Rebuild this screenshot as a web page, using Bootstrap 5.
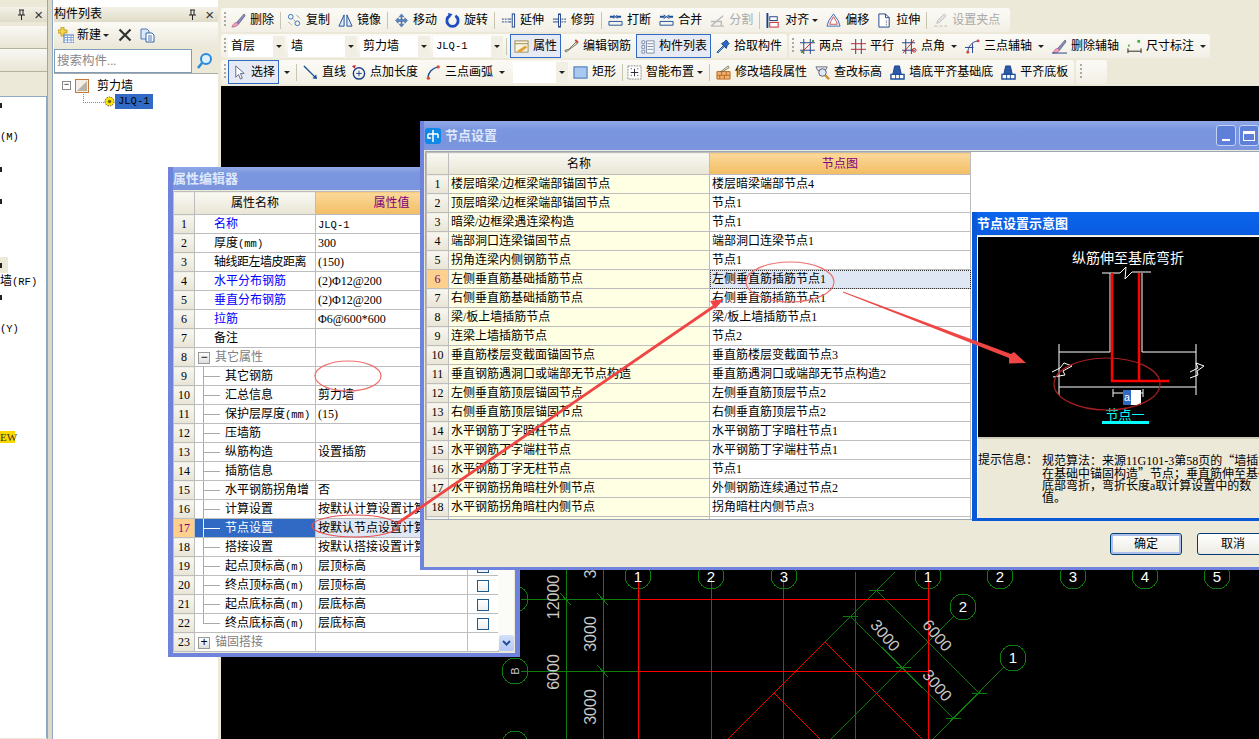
<!DOCTYPE html>
<html lang="zh-CN">
<head>
<meta charset="utf-8">
<title>节点设置</title>
<link href="https://cdn.jsdelivr.net/npm/bootstrap@5.3.0/dist/css/bootstrap.min.css" rel="stylesheet">
<style>
html,body{height:739px;overflow:hidden}
body{background:#ece9d8;color:#000;font:12px/18px "Liberation Serif","Noto Sans CJK SC",serif}
svg{display:block;flex:none}
.lat{font:10.5px "Liberation Mono","Noto Sans CJK SC",monospace}
.cjk{font-family:"Noto Sans CJK SC",sans-serif}
.pane-l{width:47px;height:739px;overflow:hidden}
.split{width:7px;height:739px;background:linear-gradient(90deg,#8fa9c4 0,#8fa9c4 1px,#ddd9c8 1px,#ddd9c8 5px,#8fa9c4 5px,#8fa9c4 6px,#fff 6px)}
.pane-m{width:164px;height:739px;overflow:hidden;background:#fff}
.split2{width:3px;height:739px;background:#ece9d8}
.pane-head{height:15px;margin-top:7px;line-height:15px;background:linear-gradient(#f4f2e8,#dedbc8);white-space:nowrap;flex:none}
.pane-x{font:15px/15px "Liberation Sans",sans-serif;color:#333}
.side-btn{height:23px;background:linear-gradient(#f9f8f3,#e9e6d6);border-bottom:1px solid #b5b2a0;flex:none}
.side-gap{height:24px;background:#ece9d8;flex:none}
.leaf-list{background:#fff;height:642px;border-right:1px solid #8fa9c4;border-top:1px solid #8fa9c4}
.leaf{height:16px;line-height:16px;white-space:nowrap}
.leaf.tk{padding-top:6px}
.leaf.tone{background:#ece9d8;width:8px}
.tick{display:block;width:2px;height:5px;background:#222}
.new-ew{background:#ffd800;color:#333;margin-top:-2px;width:15px;height:12px;line-height:12px;font-size:11px}
.m-bar{height:26px;background:linear-gradient(#fbfaf5,#ebe8d9);padding-left:4px;gap:3px;flex:none}
.m-bar .car{margin-left:-1px}
.m-x{margin-left:6px}
.m-c{margin-left:5px}
.search-wrap{height:25px;background:#ece9d8;gap:3px;flex:none}
.search-in{width:138px;height:24px;background:#fff;border:1px solid #7f9db9;color:#888;padding-left:2px;line-height:22px;font-size:12.5px}
.tree{background:#fff;padding:3px 0 0 8px;height:660px;border-top:1px solid #aaa}
.tree-line{height:17px;gap:4px}
.tree-sub{padding-left:29px}
.xbox{width:9px;height:9px;border:1px solid #888;background:#fff;font:9px/7px "Liberation Mono",monospace;text-align:center;flex:none}
.tree-sel{background:#316ac5;padding:0 3px;height:15px;line-height:15px;margin-left:0}
.dots{width:21px;height:9px;margin:-6px 0 0 -8px;border-left:1px dotted #888;border-bottom:1px dotted #888}
.main-col{flex:1;min-width:0;height:739px}
.tb-row{height:24px;margin-bottom:2px;gap:2px;flex:none}
.tb-row.first{margin-top:8px}
.tbar{height:24px;background:linear-gradient(#fbfaf6,#f2f0e5);border-radius:3px;padding:0 4px 0 3px;gap:8px;white-space:nowrap}
.tbar.t1{width:789px}
.tbar.t2a{width:566px;gap:3px}
.tbar.t2b{width:421px}
.tbar.t3a{width:853px}
.tbar.t3b{width:31px}
.grip{width:2px;height:16px;margin-right:-3px;background:repeating-linear-gradient(#aaa 0,#aaa 2px,transparent 2px,transparent 4px);flex:none}
.t2a .grip{margin-right:-1px}
.t2b .grip{margin-right:-2px}
.t3a .grip{margin-right:-6px}
.t3b .grip{margin:0 0 0 1px}
.ti{gap:4px;height:22px;flex:none}
.ti svg{width:15px;height:15px}
.sep{width:1px;height:17px;background:#c8c5b2;margin:0 -2px;flex:none}
.t2a .sep{margin:0}
.car{width:0;height:0;border:3px solid transparent;border-top:3px solid #222;border-bottom:0;margin-left:3px;flex:none}
.car.a{margin-left:-1px}
.car.b{margin-left:2px}
.car.c{margin-left:-3px}
.act{border:1px solid #316ac5;background:#e6eaf5;padding:0 3px;height:24px;gap:4px}
.m2{margin-left:2px}
.m1{margin-left:1px}
.n3{margin-left:-3px}
.n2{margin-left:-2px}
.off{color:#aaa}
.sel-box{height:21px;background:#fff;padding-left:3px;white-space:nowrap;flex:none}
.w55{width:55px}.w57{width:57px}.w69{width:69px}.w70{width:70px}
.sel-arr{width:12px;height:21px;background:#f1efe4;margin-left:auto;flex:none}
.sel-arr i{display:block;border:3px solid transparent;border-top:3px solid #222;border-bottom:0;width:0;margin:9px auto 0}
.cad{flex:1;background:#000;overflow:hidden;min-height:0}
.cad svg{shape-rendering:crispEdges}
.cad text{shape-rendering:auto}
.win{z-index:2;overflow:hidden}
.w-prop{left:168px;top:167px;width:352px;height:490px;background:#ece9d8;border:5px solid #6f82dc;border-top:0;border-bottom-width:4px}
.w-node{left:420px;top:121px;width:900px;height:449px;background:#ece9d8;border:4px solid #6f82dc;border-top:0;border-bottom-width:3px;z-index:3}
.w-view{left:972px;top:212px;width:340px;height:309px;background:#ece9d8;border:3px solid #0a57d8;border-top:0;border-left-width:5px;z-index:4}
.t-bar{height:24px;background:linear-gradient(#90a8e6,#7a96df 30%,#7a95dd);margin:0 -5px;padding-left:5px;color:#dfe8fa;font-weight:700;font-size:13px}
.w-prop .t-bar{height:23px;margin-bottom:1px}
.w-node .t-bar{height:29px;margin:0 -4px 1px;padding-left:5px;gap:4px}
.w-view .t-bar{background:linear-gradient(#0b66ec,#0a5be0);height:23px;color:#fff;margin:0 -3px 1px -5px;padding-left:5px}
.t-btns{margin-right:61px;gap:3px}
.tb-btn{width:20px;height:21px;border:1px solid #c5d2f4;border-radius:3px;background:#5f80d8}
.tb-btn i{display:block;background:#fff}
.i-min{width:8px;height:2px}
.i-max{width:12px;height:10px;border:1px solid #fff;border-top-width:3px;background:none!important}
.gridt{table-layout:fixed;margin:0;border-color:#bdbdbd;font-size:12px}
.gridt.gp{width:325px}
.gridt.gn{width:544px}
.c21{width:21px}.c22{width:22px}.c121{width:121px}.c152{width:152px}.c31{width:31px}.c261{width:261px}
.gridt>:not(caption)>*>*{padding:0 2px;height:19px;line-height:18px;white-space:nowrap;overflow:hidden;border:1px solid #bdbdbd;background-color:#fff;color:#000;vertical-align:middle}
.gridt>thead>tr>th{height:22px;font-weight:400;text-align:center;background:linear-gradient(#f9f8f2,#e9e6d6)}
.gridt.gp>thead>tr>th{height:23px}
.gridt>thead>tr>th.hot{background:linear-gradient(#fbd99b,#f2bd63);color:#800080}
.gridt>tbody>tr>td.no{background:linear-gradient(#f8f7f0,#e8e5d6);text-align:center;padding:0}
.gridt>tbody>tr>td.no.hot{background:#fdd18d;color:#800080}
.gridt>tbody>tr>td.sel{background:#316ac5;color:#fff}
.gridt>tbody>tr>td.soft{background:#dfe6f4}
.gridt>tbody>tr>td.dot{background:#dfe6f4;outline:1px dotted #333;outline-offset:-1px}
.gridt>tbody>tr>td.yel{background:#ffffe3}
.gridt>tbody>tr>td.nm{padding-left:19px}
.gridt>tbody>tr>td.tight{letter-spacing:-.5px}
.gridt>tbody>tr>td.grp{padding-left:3px;color:#808080}
.gridt>tbody>tr>td.blue{color:#00f}
.gridt>tbody>tr>td.leafc{padding-left:30px;background-image:linear-gradient(#aaa,#aaa),linear-gradient(#aaa,#aaa);background-size:1px 100%,17px 1px;background-position:8px 0,8px 50%;background-repeat:no-repeat}
.gridt>tbody>tr>td.leafc.sel{background-image:linear-gradient(#cfe,#cfe),linear-gradient(#fff,#fff)}
.gridt>tbody>tr>td.leafc.end{background-size:1px 50%,17px 1px}
.gbox{display:inline-block;width:12px;height:12px;border:1px solid #1d5a8e;background:linear-gradient(#fff,#eee);vertical-align:middle;margin-left:7px}
.xbig{display:inline-block;width:12px;height:12px;border:1px solid #999;background:linear-gradient(#fff,#ddd);font:12px/10px "Liberation Mono",monospace;text-align:center;color:#000;vertical-align:middle;margin-right:5px}
.sb-track{left:325px;top:24px;width:16px;height:459px;background:#fbfbf7}
.sb-arr{left:326px;top:468px;width:15px;height:16px;background:linear-gradient(#d4e0fa,#b5c9f5);border-radius:2px}
.grid-frame{height:369px;background:#fff;border:1px solid #9aa7b8;overflow:hidden;margin:0 -20px 0 1px}
.foot{padding:13px 0 0 686px;gap:15px}
.xp-btn{width:72px;height:22px;line-height:18px;padding:0;font-size:12px;border:1px solid #003c74;border-radius:3px;background:linear-gradient(#fff,#ecebe3);color:#000;flex:none;box-shadow:none}
.xp-btn.def{box-shadow:inset 0 0 0 2px #a9c0ec}
.v-body{border-top:1px solid #fff;border-left:1px solid #fff}
.v-info{height:81px;padding:15px 0 0 0;border-top:2px solid #cfccb9;line-height:12px;font-size:12px;white-space:nowrap}
.v-lab{width:64px;flex:none}
.annot{left:0;top:0;width:1259px;height:739px;z-index:5;pointer-events:none}
</style>
</head>
<body class="d-flex align-items-start">

<aside class="pane-l d-flex flex-column">
  <div class="pane-head d-flex align-items-center justify-content-end gap-2 pe-1">
    <svg width="9" height="11" viewBox="0 0 9 11"><path d="M2 1h5M3 1v5M6 1v5M1 6h7M4.500 6v5" stroke="#222" fill="none"/></svg>
    <span class="pane-x">×</span>
  </div>
  <div class="side-btn mt-1"></div>
  <div class="side-btn"></div>
  <div class="side-gap"></div>
  <div class="leaf-list">
    <div class="leaf tk"><span class="tick"></span></div>
    <div class="leaf"></div>
    <div class="leaf lat">(M)</div>
    <div class="leaf"></div>
    <div class="leaf tk"><span class="tick"></span></div>
    <div class="leaf"></div>
    <div class="leaf tk"><span class="tick"></span></div>
    <div class="leaf"></div><div class="leaf"></div><div class="leaf"></div>
    <div class="leaf tk tone"><span class="tick"></span></div>
    <div class="leaf">墙<span class="lat">(RF)</span></div>
    <div class="leaf tk"><span class="tick"></span></div>
    <div class="leaf"></div>
    <div class="leaf lat">(Y)</div>
    <div class="leaf"></div><div class="leaf"></div><div class="leaf"></div><div class="leaf"></div><div class="leaf"></div><div class="leaf"></div>
    <div class="new-ew">EW</div>
  </div>
</aside>
<div class="split"></div>

<aside class="pane-m d-flex flex-column">
  <div class="pane-head d-flex align-items-center">
    <span>构件列表</span>
    <span class="ms-auto d-flex align-items-center gap-2 pe-1">
      <svg width="9" height="11" viewBox="0 0 9 11"><path d="M2 1h5M3 1v5M6 1v5M1 6h7M4.500 6v5" stroke="#222" fill="none"/></svg>
      <span class="pane-x">×</span>
    </span>
  </div>
  <div class="m-bar d-flex align-items-center">
    <svg width="16" height="16" viewBox="0 0 16 16"><path d="M3 0h3v3h3v3H6v3H3V6H0V3h3z" fill="#f7d548" stroke="#a98a10" stroke-width=".7"/><rect x="6" y="8" width="10" height="8" fill="#fff" stroke="#4a78c0"/><path d="M6 10.500h10M6 13h10M9.500 8v8M13 8v8" stroke="#7ea3d8"/></svg>
    <span>新建</span><span class="car"></span>
    <svg class="m-x" width="14" height="14" viewBox="0 0 14 14"><path d="M1.500 1.500l11 11M12.500 1.500l-11 11" stroke="#333" stroke-width="2.200"/></svg>
    <svg class="m-c" width="15" height="15" viewBox="0 0 15 15"><path d="M1 1h6l2 2v8H1z" fill="#dce9fa" stroke="#4a78c0"/><path d="M6 5h6l2 2v7H6z" fill="#fff" stroke="#3366aa"/><path d="M8 8h4M8 10h4M8 12h4" stroke="#4a78c0"/></svg>
  </div>
  <div class="search-wrap d-flex align-items-center">
    <div class="search-in">搜索构件...</div>
    <svg width="20" height="20" viewBox="0 0 20 20"><circle cx="11" cy="8" r="5" fill="#dff0ff" stroke="#2a8ae0" stroke-width="2"/><path d="M7 12l-4 5" stroke="#2a8ae0" stroke-width="2.500"/></svg>
  </div>
  <div class="tree">
    <div class="tree-line d-flex align-items-center">
      <span class="xbox">−</span>
      <svg width="14" height="14" viewBox="0 0 14 14"><rect x=".5" y=".5" width="13" height="13" fill="#f3efe6" stroke="#c8793c"/><path d="M2 12L12 2v10z" fill="#b9b3a6"/></svg>
      <span class="ms-1">剪力墙</span>
    </div>
    <div class="tree-sub d-flex align-items-center">
      <span class="dots"></span>
      <svg width="11" height="11" viewBox="0 0 11 11"><circle cx="5.500" cy="5.500" r="4.500" fill="#ffe600" stroke="#555" stroke-dasharray="1.500 1"/><circle cx="5.500" cy="5.500" r="1.800" fill="#7a6a00"/></svg>
      <span class="tree-sel lat">JLQ-1</span>
    </div>
  </div>
</aside>
<div class="split2"></div>

<main class="main-col d-flex flex-column">
  <div class="tb-row first d-flex">
    <div class="tbar t1 d-flex align-items-center">
      <span class="grip"></span>
      <span class="ti d-flex align-items-center"><svg viewBox="0 0 16 16"><path d="M14 1L6 10l2 2 7-9z" fill="#8a8ad0" stroke="#444" stroke-width=".6"/><path d="M6 10c-2 0-4 2-5 5 3 0 6-1 7-3z" fill="#f0a0c0" stroke="#a04070" stroke-width=".6"/></svg><span>删除</span></span>
      <span class="sep"></span>
      <span class="ti d-flex align-items-center"><svg viewBox="0 0 16 16"><circle cx="4" cy="4" r="2.500" fill="none" stroke="#3070c0"/><circle cx="11" cy="11" r="2.500" fill="none" stroke="#3070c0"/><path d="M6 6l3 3M2 10l3 3M10 2l4 4" stroke="#555" stroke-dasharray="1 1"/></svg><span>复制</span></span>
      <span class="ti d-flex align-items-center"><svg viewBox="0 0 16 16"><path d="M6.500 2L1 14h5.500zM9.500 2L15 14H9.500z" fill="#dfeafa" stroke="#1d4f9a"/></svg><span>镜像</span></span>
      <span class="sep"></span>
      <span class="ti d-flex align-items-center"><svg viewBox="0 0 16 16"><path d="M8 1l2.500 3h-2v3h3V5l3 3-3 3V9h-3v3h2L8 15l-2.500-3h2V9h-3v2l-3-3 3-3v2h3V4h-2z" fill="#5a88c8" stroke="#274f8c" stroke-width=".5"/></svg><span>移动</span></span>
      <span class="ti d-flex align-items-center"><svg viewBox="0 0 16 16"><path d="M5 3a6 6 0 1 0 6 0" fill="none" stroke="#1d4fc0" stroke-width="3"/><path d="M3 0l5 1-3 4z" fill="#1d4fc0"/></svg><span>旋转</span></span>
      <span class="sep"></span>
      <span class="ti d-flex align-items-center"><svg viewBox="0 0 16 16"><path d="M1 6.500h7M1 9.500h7" stroke="#1d3f8a" stroke-dasharray="2 1"/><path d="M8 6.500h3M8 9.500h3" stroke="#1d3f8a"/><rect x="12" y="1" width="2.500" height="14" fill="#fff" stroke="#1d3f8a"/></svg><span>延伸</span></span>
      <span class="ti d-flex align-items-center"><svg viewBox="0 0 16 16"><path d="M1 6.500h6M1 9.500h6" stroke="#1d3f8a"/><path d="M10 6.500h5M10 9.500h5" stroke="#1d3f8a" stroke-dasharray="2 1"/><rect x="7" y="1" width="2" height="14" fill="#fff" stroke="#1d3f8a"/></svg><span>修剪</span></span>
      <span class="sep"></span>
      <span class="ti d-flex align-items-center"><svg viewBox="0 0 16 16"><path d="M1 9h14M1 13h14M1 9v4M15 9v4" stroke="#1d4f9a" fill="none"/><path d="M2 4h5M9 4h5" stroke="#1d4f9a" stroke-width="2"/><path d="M6 2l2 2-2 2M10 2L8 4l2 2" stroke="#1d4f9a" fill="none"/></svg><span>打断</span></span>
      <span class="ti d-flex align-items-center"><svg viewBox="0 0 16 16"><path d="M1 9h14M1 13h14M1 9v4M15 9v4" stroke="#1d4f9a" fill="none"/><path d="M1 4h5M10 4h5" stroke="#1d4f9a" stroke-width="2"/><path d="M5 2l3 2-3 2M11 2L8 4l3 2" stroke="#1d4f9a" fill="none"/></svg><span>合并</span></span>
      <span class="ti d-flex align-items-center off"><svg viewBox="0 0 16 16"><path d="M1 14L14 3M1 14h14M1 9h11v5" stroke="#bbb" fill="none" stroke-width="1.500"/></svg><span>分割</span></span>
      <span class="sep"></span>
      <span class="ti d-flex align-items-center"><svg viewBox="0 0 16 16"><path d="M1.500 0v16" stroke="#1d3f8a" stroke-width="2"/><rect x="4" y="4" width="8" height="4" fill="#fff" stroke="#1d3f8a"/><rect x="4" y="10" width="9" height="5" fill="#fff" stroke="#c02030"/></svg><span>对齐</span><span class="car a"></span></span>
      <span class="ti d-flex align-items-center"><svg viewBox="0 0 16 16"><path d="M8 1l5 7 2 6H1l2-6z" fill="#eef2fa" stroke="#3a6ab0"/><path d="M8 4l3 5 1 3H4l1-3z" fill="#fff" stroke="#d05050"/></svg><span>偏移</span></span>
      <span class="ti d-flex align-items-center"><svg viewBox="0 0 16 16"><path d="M2 1h7l4 4v10H2z" fill="#fff" stroke="#1d3f8a"/><path d="M9 1v4h4" fill="none" stroke="#1d3f8a"/><path d="M10 8v6" stroke="#555" stroke-dasharray="1 1"/></svg><span>拉伸</span></span>
      <span class="sep"></span>
      <span class="ti d-flex align-items-center off"><svg viewBox="0 0 16 16"><path d="M12 1l2 2-7 7-3 1 1-3zM1 14h4M7 14h3M12 14h3" stroke="#bbb" fill="#e4e4e4"/></svg><span>设置夹点</span></span>
    </div>
  </div>

  <div class="tb-row d-flex">
    <div class="tbar t2a d-flex align-items-center">
      <span class="grip"></span>
      <div class="sel-box w57 d-flex align-items-center">首层<span class="sel-arr"><i></i></span></div>
      <div class="sel-box w69 d-flex align-items-center">墙<span class="sel-arr"><i></i></span></div>
      <div class="sel-box w70 d-flex align-items-center">剪力墙<span class="sel-arr"><i></i></span></div>
      <div class="sel-box w70 d-flex align-items-center"><span class="lat">JLQ-1</span><span class="sel-arr"><i></i></span></div>
      <span class="sep"></span>
      <span class="ti act d-flex align-items-center"><svg viewBox="0 0 16 16"><rect x="1" y="2" width="14" height="12" fill="#f8f4e4" stroke="#a08a50"/><path d="M1 5h14" stroke="#a08a50"/><path d="M3 13l9-6 2 2-7 5z" fill="#e0a030"/></svg><span>属性</span></span>
      <span class="ti d-flex align-items-center"><svg viewBox="0 0 16 16"><path d="M14 2l-9 9-4 1 1 2 12-9z" fill="#e8e0b0" stroke="#444" stroke-width=".7"/><path d="M12 1l3 3" stroke="#d04040" stroke-width="2"/></svg><span>编辑钢筋</span></span>
      <span class="ti act m2 d-flex align-items-center"><svg viewBox="0 0 16 16"><path d="M2 2h3v3H2zM2 7h3v3H2zM2 12h3v3H2z" fill="#fff" stroke="#7a8aa8"/><path d="M7 2h8v13H7z" fill="#fff" stroke="#7a8aa8"/><path d="M8 5h6M8 8h6M8 11h6" stroke="#7a8aa8"/></svg><span>构件列表</span></span>
      <span class="ti m1 d-flex align-items-center"><svg viewBox="0 0 16 16"><path d="M9 7l-7 7 1 1 7-7z" fill="#8fb8ea" stroke="#1d4f9a"/><path d="M7 5l5 5 1-3 2-2-3-4-2 2z" fill="#2a6ac0" stroke="#1d3f8a"/></svg><span>拾取构件</span></span>
    </div>
    <div class="tbar t2b d-flex align-items-center">
      <span class="grip"></span>
      <span class="ti d-flex align-items-center"><svg viewBox="0 0 16 16"><path d="M4 0v16M11 0v16M0 4h16M0 12h16" stroke="#1d3f8a"/><path d="M2 14L14 2" stroke="#d02020"/><rect x="1" y="13" width="2" height="2" fill="#3a9a30"/><rect x="13" y="1" width="2" height="2" fill="#3a9a30"/></svg><span>两点</span></span>
      <span class="ti d-flex align-items-center"><svg viewBox="0 0 16 16"><path d="M5 0v16M11 0v16" stroke="#1d3f8a"/><path d="M0 5h16M0 11h16" stroke="#c02030"/></svg><span>平行</span></span>
      <span class="ti d-flex align-items-center"><svg viewBox="0 0 16 16"><path d="M4 0v16M10 0v16M0 4h14M0 12h14" stroke="#1d3f8a"/><path d="M1 15L13 1" stroke="#d02020"/><circle cx="13" cy="12" r="2" fill="none" stroke="#d02020"/></svg><span>点角</span><span class="car b"></span></span>
      <span class="ti d-flex align-items-center"><svg viewBox="0 0 16 16"><path d="M3 15C3 8 7 3 14 2" fill="none" stroke="#1d3f8a"/><path d="M0 9h9M8 5v10" stroke="#1d3f8a"/><circle cx="3" cy="14" r="1.500" fill="#d04040"/><circle cx="14" cy="2" r="1.500" fill="#d04040"/></svg><span>三点辅轴</span><span class="car b"></span></span>
      <span class="ti d-flex align-items-center"><svg viewBox="0 0 16 16"><path d="M14 1L6 10l2 2 7-9z" fill="#8a8ad0" stroke="#444" stroke-width=".6"/><path d="M6 10c-2 0-4 2-5 5 3 0 6-1 7-3z" fill="#f0a0c0" stroke="#a04070" stroke-width=".6"/><path d="M0 15h16" stroke="#1d3f8a"/></svg><span>删除辅轴</span></span>
      <span class="ti d-flex align-items-center"><svg viewBox="0 0 16 16"><rect x="11" y="1" width="3" height="3" fill="#4ab04a"/><rect x="1" y="6" width="2" height="2" fill="#4ab04a"/><path d="M1 10v5M15 10v5M1 13h14" stroke="#222"/></svg><span>尺寸标注</span><span class="car b"></span></span>
    </div>
  </div>

  <div class="tb-row d-flex">
    <div class="tbar t3a d-flex align-items-center">
      <span class="grip"></span>
      <span class="ti act d-flex align-items-center"><svg viewBox="0 0 16 16"><path d="M4 1v12l3-3 2 5 2-1-2-5h4z" fill="#fff" stroke="#5a6a8a"/></svg><span>选择</span></span>
      <span class="car c"></span>
      <span class="sep"></span>
      <span class="ti d-flex align-items-center"><svg viewBox="0 0 16 16"><path d="M1 1l13 13" stroke="#1d4f9a" stroke-width="1.500"/><path d="M15 15l-5-1 4-4z" fill="#1d4f9a"/></svg><span>直线</span></span>
      <span class="ti n3 d-flex align-items-center"><svg viewBox="0 0 16 16"><circle cx="8.500" cy="9" r="6" fill="none" stroke="#1d3f8a" stroke-width="1.500"/><path d="M8.500 6v6M5.500 9h6" stroke="#1d3f8a"/><path d="M1 1l3 3 1-4z" fill="#c02030"/></svg><span>点加长度</span></span>
      <span class="ti d-flex align-items-center"><svg viewBox="0 0 16 16"><path d="M2 14C2 8 7 3 13 2" fill="none" stroke="#1d4f9a" stroke-width="1.500"/><circle cx="2.500" cy="14" r="1.800" fill="#e05030"/><circle cx="13" cy="2" r="1.800" fill="#e05030"/></svg><span>三点画弧</span><span class="car b"></span></span>
      <div class="sel-box w55 d-flex align-items-center"><span class="sel-arr"><i></i></span></div>
      <span class="ti n3 d-flex align-items-center"><svg viewBox="0 0 16 16"><rect x="1" y="2" width="14" height="12" fill="#a9c8f0" stroke="#3a6ab0"/></svg><span>矩形</span></span>
      <span class="sep"></span>
      <span class="ti n2 d-flex align-items-center"><svg viewBox="0 0 16 16"><rect x="1" y="1" width="14" height="14" fill="#fff" stroke="#888" stroke-dasharray="2 1"/><path d="M4 8h8M8 4v8M4 4h1M11 4h1M4 11h1M11 11h1" stroke="#223"/></svg><span>智能布置</span><span class="car a"></span></span>
      <span class="sep"></span>
      <span class="ti d-flex align-items-center"><svg viewBox="0 0 16 16"><path d="M1 7h14v8H1z" fill="#f0b070" stroke="#b86a20"/><path d="M1 11h14M6 7v4M11 7v4M4 11v4M9 11v4" stroke="#b86a20"/><path d="M5 7l8-6 1 2-7 4z" fill="#e8e0b0" stroke="#444" stroke-width=".6"/></svg><span>修改墙段属性</span></span>
      <span class="ti d-flex align-items-center"><svg viewBox="0 0 16 16"><path d="M1 2h12l-2 4H3z" fill="#e8ecf4" stroke="#667"/><circle cx="8" cy="8" r="4" fill="#dfe8f5" stroke="#556"/><path d="M11 11l4 4" stroke="#d09030" stroke-width="2.500"/></svg><span>查改标高</span></span>
      <span class="ti d-flex align-items-center"><svg viewBox="0 0 16 16"><path d="M5 1h5l2 9H3z" fill="#2a5aa8" stroke="#1d3f8a"/><path d="M1 10h14v5H1z" fill="#fff" stroke="#1d4fa0" stroke-width="1.500"/><path d="M6 10v5M10 10v5" stroke="#1d4fa0"/></svg><span>墙底平齐基础底</span></span>
      <span class="ti d-flex align-items-center"><svg viewBox="0 0 16 16"><path d="M5 1h5l2 9H3z" fill="#2a5aa8" stroke="#1d3f8a"/><path d="M1 10h14v5H1z" fill="#fff" stroke="#1d4fa0" stroke-width="1.500"/><path d="M6 10v5M10 10v5" stroke="#1d4fa0"/></svg><span>平齐底板</span></span>
    </div>
    <div class="tbar t3b d-flex align-items-center"><span class="grip"></span></div>
  </div>

  <div class="cad">
    <svg width="1039" height="655" viewBox="220 84 1039 655" fill="none">
      <g stroke="#0a7d0a">
        <path d="M565 560V739M602 560V739M520 597H637M520 669H637"/>
        <path d="M559 591l11 12M596 591l11 12M596 663l11 12"/>
        <path d="M894 570L824 640M952 615L828 739M1002 666L930 739M875 588L978 691M849 614L952 716"/>
        <path d="M868 588h15M842 614h15M895 665h15M971 691h15M945 716h15"/>
        <circle cx="637" cy="574" r="13"/><circle cx="710" cy="574" r="13"/><circle cx="783" cy="574" r="13"/>
        <circle cx="927" cy="574" r="13"/><circle cx="999" cy="574" r="13"/><circle cx="1072" cy="574" r="13"/><circle cx="1144" cy="574" r="13"/><circle cx="1216" cy="574" r="13"/>
        <circle cx="962" cy="605" r="13"/><circle cx="1012" cy="656" r="13"/>
        <circle cx="514" cy="597" r="13"/><circle cx="514" cy="669" r="13"/><circle cx="514" cy="742" r="13"/>
      </g>
      <g stroke="#ff0000">
        <path d="M637 575V739M710 575V739M782 575V739M854 570V739M927 575V739M637 597H927M637 669H927"/>
        <path d="M824 640L725 739M824 640L923 739M773 691L821 739"/>
      </g>
      <g fill="#9b00d8"><rect x="632" y="737" width="10" height="3"/><rect x="705" y="737" width="10" height="3"/><rect x="777" y="737" width="10" height="3"/><rect x="922" y="737" width="10" height="3"/></g>
      <g font-family="Liberation Sans,sans-serif" font-size="15" fill="#fff" text-anchor="middle">
        <text x="637" y="580">1</text><text x="710" y="580">2</text><text x="783" y="580">3</text>
        <text x="927" y="580">1</text><text x="999" y="580">2</text><text x="1072" y="580">3</text><text x="1144" y="580">4</text><text x="1216" y="580">5</text>
        <text x="962" y="610">2</text><text x="1012" y="661">1</text>
      </g>
      <g font-family="Liberation Sans,sans-serif" font-size="16" fill="#c8c8c8" text-anchor="middle">
        <text transform="translate(558 595) rotate(-90)">12000</text>
        <text transform="translate(558 670) rotate(-90)">6000</text>
        <text transform="translate(595 632) rotate(-90)">3000</text>
        <text transform="translate(595 705) rotate(-90)">3000</text>
        <text transform="translate(595 572) rotate(-90)">3</text>
        <text transform="translate(880 637) rotate(50)">3000</text>
        <text transform="translate(932 637) rotate(50)">6000</text>
        <text transform="translate(932 687) rotate(50)">3000</text>
        <text transform="translate(518 669) rotate(-90)" font-size="11">B</text>
      </g>
    </svg>
  </div>
</main>

<section class="win w-prop position-absolute">
  <div class="t-bar d-flex align-items-center">属性编辑器</div>
  <table class="table gridt gp">
    <colgroup><col class="c21"><col class="c121"><col class="c152"><col class="c31"></colgroup>
    <thead><tr><th></th><th>属性名称</th><th class="hot">属性值</th><th></th></tr></thead>
    <tbody>
      <tr><td class="no">1</td><td class="nm blue">名称</td><td><span class="lat">JLQ-1</span></td><td></td></tr>
      <tr><td class="no">2</td><td class="nm">厚度<span class="lat">(mm)</span></td><td>300</td><td></td></tr>
      <tr><td class="no">3</td><td class="nm tight">轴线距左墙皮距离</td><td>(150)</td><td></td></tr>
      <tr><td class="no">4</td><td class="nm blue">水平分布钢筋</td><td>(2)Φ12@200</td><td></td></tr>
      <tr><td class="no">5</td><td class="nm blue">垂直分布钢筋</td><td>(2)Φ12@200</td><td></td></tr>
      <tr><td class="no">6</td><td class="nm blue">拉筋</td><td>Φ6@600*600</td><td></td></tr>
      <tr><td class="no">7</td><td class="nm">备注</td><td></td><td></td></tr>
      <tr><td class="no">8</td><td class="grp"><span class="xbig">−</span>其它属性</td><td></td><td></td></tr>
      <tr><td class="no">9</td><td class="leafc">其它钢筋</td><td></td><td></td></tr>
      <tr><td class="no">10</td><td class="leafc">汇总信息</td><td>剪力墙</td><td></td></tr>
      <tr><td class="no">11</td><td class="leafc">保护层厚度<span class="lat">(mm)</span></td><td>(15)</td><td></td></tr>
      <tr><td class="no">12</td><td class="leafc">压墙筋</td><td></td><td></td></tr>
      <tr><td class="no">13</td><td class="leafc">纵筋构造</td><td>设置插筋</td><td></td></tr>
      <tr><td class="no">14</td><td class="leafc">插筋信息</td><td></td><td></td></tr>
      <tr><td class="no">15</td><td class="leafc">水平钢筋拐角增</td><td>否</td><td></td></tr>
      <tr><td class="no">16</td><td class="leafc">计算设置</td><td>按默认计算设置计算</td><td></td></tr>
      <tr><td class="no hot">17</td><td class="leafc sel">节点设置</td><td class="soft">按默认节点设置计算</td><td></td></tr>
      <tr><td class="no">18</td><td class="leafc">搭接设置</td><td>按默认搭接设置计算</td><td></td></tr>
      <tr><td class="no">19</td><td class="leafc">起点顶标高<span class="lat">(m)</span></td><td>层顶标高</td><td><span class="gbox"></span></td></tr>
      <tr><td class="no">20</td><td class="leafc">终点顶标高<span class="lat">(m)</span></td><td>层顶标高</td><td><span class="gbox"></span></td></tr>
      <tr><td class="no">21</td><td class="leafc">起点底标高<span class="lat">(m)</span></td><td>层底标高</td><td><span class="gbox"></span></td></tr>
      <tr><td class="no">22</td><td class="leafc end">终点底标高<span class="lat">(m)</span></td><td>层底标高</td><td><span class="gbox"></span></td></tr>
      <tr><td class="no">23</td><td class="grp"><span class="xbig">+</span>锚固搭接</td><td></td><td></td></tr>
    </tbody>
  </table>
  <div class="sb-track position-absolute"></div>
  <div class="sb-arr position-absolute d-flex align-items-center justify-content-center">
    <svg width="9" height="7" viewBox="0 0 9 7"><path d="M1 1l3.500 3.500L8 1" fill="none" stroke="#2a4f9a" stroke-width="2"/></svg>
  </div>
</section>

<section class="win w-node position-absolute">
  <div class="t-bar d-flex align-items-center">
    <svg width="16" height="16" viewBox="0 0 16 16"><rect width="16" height="16" rx="3" fill="#1088e8"/><path d="M8 2v12M3 6h10M3 6v4h3M13 6v4" stroke="#fff" stroke-width="1.500" fill="none"/></svg>
    <span>节点设置</span>
    <span class="t-btns d-flex ms-auto">
      <span class="tb-btn d-flex align-items-end justify-content-center pb-1"><i class="i-min"></i></span>
      <span class="tb-btn d-flex align-items-center justify-content-center"><i class="i-max"></i></span>
    </span>
  </div>
  <div class="grid-frame">
    <table class="table gridt gn">
      <colgroup><col class="c22"><col class="c261"><col class="c261"></colgroup>
      <thead><tr><th></th><th>名称</th><th class="hot">节点图</th></tr></thead>
      <tbody>
        <tr><td class="no">1</td><td class="yel">楼层暗梁/边框梁端部锚固节点</td><td>楼层暗梁端部节点4</td></tr>
        <tr><td class="no">2</td><td class="yel">顶层暗梁/边框梁端部锚固节点</td><td>节点1</td></tr>
        <tr><td class="no">3</td><td class="yel">暗梁/边框梁遇连梁构造</td><td>节点1</td></tr>
        <tr><td class="no">4</td><td class="yel">端部洞口连梁锚固节点</td><td>端部洞口连梁节点1</td></tr>
        <tr><td class="no">5</td><td class="yel">拐角连梁内侧钢筋节点</td><td>节点1</td></tr>
        <tr><td class="no hot">6</td><td class="yel">左侧垂直筋基础插筋节点</td><td class="dot">左侧垂直筋插筋节点1</td></tr>
        <tr><td class="no">7</td><td class="yel">右侧垂直筋基础插筋节点</td><td>右侧垂直筋插筋节点1</td></tr>
        <tr><td class="no">8</td><td class="yel">梁/板上墙插筋节点</td><td>梁/板上墙插筋节点1</td></tr>
        <tr><td class="no">9</td><td class="yel">连梁上墙插筋节点</td><td>节点2</td></tr>
        <tr><td class="no">10</td><td class="yel">垂直筋楼层变截面锚固节点</td><td>垂直筋楼层变截面节点3</td></tr>
        <tr><td class="no">11</td><td class="yel">垂直钢筋遇洞口或端部无节点构造</td><td>垂直筋遇洞口或端部无节点构造2</td></tr>
        <tr><td class="no">12</td><td class="yel">左侧垂直筋顶层锚固节点</td><td>左侧垂直筋顶层节点2</td></tr>
        <tr><td class="no">13</td><td class="yel">右侧垂直筋顶层锚固节点</td><td>右侧垂直筋顶层节点2</td></tr>
        <tr><td class="no">14</td><td class="yel">水平钢筋丁字暗柱节点</td><td>水平钢筋丁字暗柱节点1</td></tr>
        <tr><td class="no">15</td><td class="yel">水平钢筋丁字端柱节点</td><td>水平钢筋丁字端柱节点1</td></tr>
        <tr><td class="no">16</td><td class="yel">水平钢筋丁字无柱节点</td><td>节点1</td></tr>
        <tr><td class="no">17</td><td class="yel">水平钢筋拐角暗柱外侧节点</td><td>外侧钢筋连续通过节点2</td></tr>
        <tr><td class="no">18</td><td class="yel">水平钢筋拐角暗柱内侧节点</td><td>拐角暗柱内侧节点3</td></tr>
        <tr><td class="no">19</td><td class="yel">水平钢筋遇连梁构造节点</td><td>节点1</td></tr>
      </tbody>
    </table>
  </div>
  <div class="foot d-flex">
    <button class="btn xp-btn def" type="button">确定</button>
    <button class="btn xp-btn" type="button">取消</button>
  </div>
</section>

<section class="win w-view position-absolute">
  <div class="t-bar d-flex align-items-center">节点设置示意图</div>
  <div class="v-body">
    <svg width="320" height="200" viewBox="978 236 320 200" fill="none">
      <rect x="978" y="236" width="320" height="200" fill="#000"/>
      <text x="1128" y="262" font-size="14" fill="#fff" text-anchor="middle" font-family="Noto Sans CJK SC,sans-serif">纵筋伸至基底弯折</text>
      <g stroke="#fff">
        <path d="M1102 272h18l6-6-1 12 7-7h19M1110 272v79H1059M1142 272v79h54M1059 343v51M1196 343v51M1059 386h137"/>
        <path d="M1052 371l8-4 4-5 8 3-9 5 2 4-12 2M1190 371l8-4-2-5 8 3-7 5 1 4-8 3"/>
        <path d="M1113 392h30M1113 388v8M1143 388v8"/>
      </g>
      <path d="M1112 272v108h27V272M1139 380h30" stroke="#f00" stroke-width="2.500"/>
      <rect x="1123" y="389" width="18" height="15" fill="#fff"/>
      <rect x="1123" y="389" width="8" height="15" fill="#316ac5"/>
      <text x="1127" y="400" font-size="11" fill="#fff" text-anchor="middle" font-family="Liberation Mono,monospace">a</text>
      <text x="1125" y="418" font-size="13" fill="#0ff" text-anchor="middle" font-family="Noto Sans CJK SC,sans-serif">节点一</text>
      <rect x="1102" y="420" width="47" height="3" fill="#0ff"/>
    </svg>
    <div class="v-info d-flex">
      <div class="v-lab">提示信息：</div>
      <div>规范算法：来源11G101-3第58页的<span class="cjk">“</span>墙插筋<br>在基础中锚固构造<span class="cjk">”</span>节点；垂直筋伸至基础<br>底部弯折，弯折长度a取计算设置中的数<br>值。</div>
    </div>
  </div>
</section>

<svg class="annot position-absolute" viewBox="0 0 1259 739" fill="none">
  <ellipse cx="348" cy="376" rx="33" ry="15" stroke="#f07070" stroke-width="1.200"/>
  <ellipse cx="355" cy="526" rx="43" ry="11" stroke="#e85050" stroke-width="1.200"/>
  <ellipse cx="790" cy="282" rx="44" ry="20" stroke="#f07070" stroke-width="1.200"/>
  <ellipse cx="1107" cy="384" rx="53" ry="26" stroke="#a82020" stroke-width="1.200"/>
  <path d="M398 523L716 305" stroke="#f04545" stroke-width="2.800"/>
  <path d="M724 299l-14 2 5 8z" fill="#f04545"/>
  <path d="M843 291.500L1011 354l3-2 12 11-17 .5 0-5.500L843 292.500z" fill="#f04545"/>
</svg>

<script src="https://cdn.jsdelivr.net/npm/bootstrap@5.3.0/dist/js/bootstrap.bundle.min.js"></script>
</body>
</html>
